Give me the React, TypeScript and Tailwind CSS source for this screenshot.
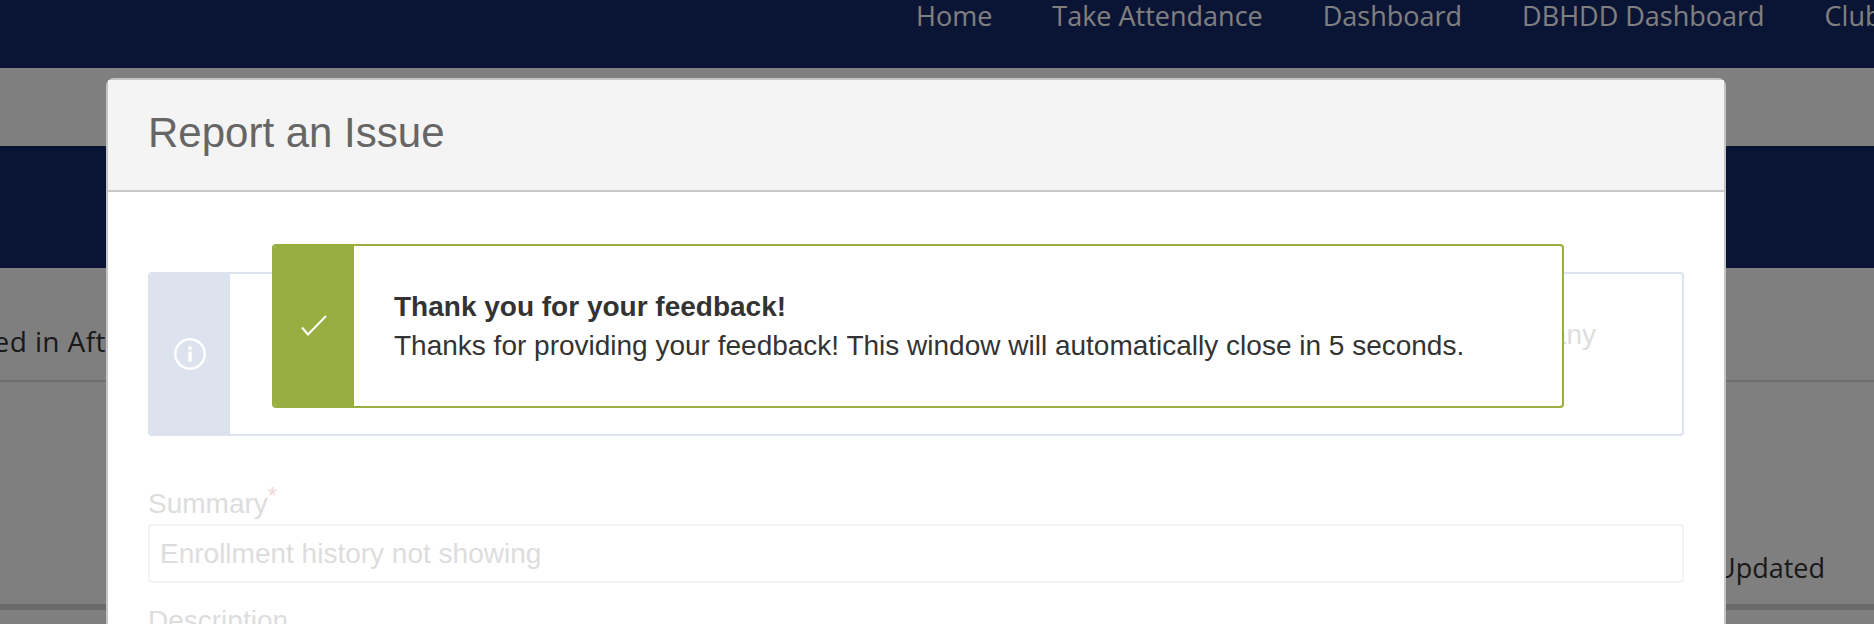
const navItems = ["Home", "Take Attendance", "Dashboard", "DBHDD Dashboard", "Clubs"];

function Page() {
  return (
    <div className="font-['Open_Sans',sans-serif]">
      <nav className="h-[68px] bg-[#14286a] pl-[916px]">
        <ul className="flex gap-[60px] whitespace-nowrap text-[27px] leading-[32px] text-white">
          {navItems.map((item) => (
            <li key={item}>{item}</li>
          ))}
        </ul>
      </nav>
      <div className="h-[78px]" />
      <div className="h-[122px] bg-[#14286a]" />
      <div className="flex h-[114px] items-end border-b-2 border-[#dcdcdc] pb-[21px]">
        <span className="-ml-[84px] whitespace-nowrap text-[28px] leading-[36px] tracking-[0.4px] text-[#333]">
          Enrolled in After School
        </span>
      </div>
      <div className="flex h-[222px] flex-col items-end">
        <span className="mr-[49px] mt-[168px] text-[27px] leading-[36px] text-[#333]">Updated</span>
        <div className="mt-[18px] h-[6px] w-full shrink-0 bg-[#d4d4d4]" />
      </div>
    </div>
  );
}

function SuccessAlert() {
  return (
    <div className="absolute left-[166px] top-[166px] flex h-[164px] w-[1292px] overflow-hidden rounded-[4px] border-2 border-[#98ae40] bg-white">
      <div className="flex w-[80px] shrink-0 items-center justify-center bg-[#98ae40]">
        <svg viewBox="0 0 26 22" className="h-[22px] w-[26px]" fill="none" stroke="white" strokeWidth="2">
          <polyline points="1,12.5 7,19.5 25,1" />
        </svg>
      </div>
      <div className="flex flex-col justify-center pl-[40px] text-[28px] leading-[39px] text-[#333]">
        <strong className="font-bold">Thank you for your feedback!</strong>
        <p>Thanks for providing your feedback! This window will automatically close in 5 seconds.</p>
      </div>
    </div>
  );
}

function IssueModal() {
  return (
    <div className="absolute left-[106px] top-[78px] h-[700px] w-[1620px] rounded-t-[8px] border-2 border-[#c4c4c4] bg-white">
      <header className="flex h-[112px] items-center border-b-2 border-[#c8c8c8] bg-[#f4f4f4] pb-[4px] pl-[40px]">
        <h1 className="text-[42px] leading-none text-[#666]">Report an Issue</h1>
      </header>
      <div className="px-[40px] pt-[80px]">
        <div className="relative flex h-[164px] overflow-hidden rounded-[4px] border-2 border-[#dce3ee]">
          <div className="flex w-[80px] shrink-0 items-center justify-center bg-[#dce3ee]">
            <svg viewBox="0 0 32 32" className="h-[32px] w-[32px]" fill="none">
              <circle cx="16" cy="16" r="14.7" stroke="white" strokeWidth="2.4" />
              <rect x="14.3" y="13.5" width="3.4" height="10" fill="white" />
              <rect x="14.3" y="8.5" width="3.4" height="3.4" fill="white" />
            </svg>
          </div>
          <div className="flex-1 pr-[86px] pt-[43px] text-right text-[28px] leading-[36px] text-[#ddd]">any</div>
        </div>
        <label className="mt-[50px] block h-[36px] text-[28px] leading-[36px] text-[#ddd]">
          Summary<sup className="inline-block translate-y-[3px] text-[24px] text-[#f3d6d6]">*</sup>
        </label>
        <div className="mt-[2px] flex h-[59px] items-center rounded-[4px] border-2 border-[#f3f3f3] pl-[10px] text-[28px] text-[#ddd]">
          Enrollment history not showing
        </div>
        <label className="mt-[20px] block text-[28px] leading-[36px] text-[#ddd]">Description</label>
      </div>
    </div>
  );
}

export default function App() {
  return (
    <div className="relative h-[624px] w-[1874px] overflow-hidden bg-white font-['Liberation_Sans',sans-serif]">
      <Page />
      <div className="absolute inset-0 bg-black/50" />
      <IssueModal />
      <div className="absolute left-[106px] top-[78px]">
        <SuccessAlert />
      </div>
    </div>
  );
}
